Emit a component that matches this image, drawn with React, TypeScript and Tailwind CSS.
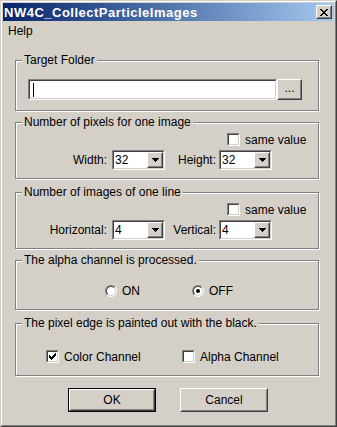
import React from "react";

const FONT = { fontFamily: '"Liberation Sans", Arial, sans-serif' };

function Raised({ className = "", children }: { className?: string; children?: React.ReactNode }) {
  return (
    <div className={`border border-t-white border-l-white border-r-[#404040] border-b-[#404040] ${className}`}>
      <div className="w-full h-full border border-t-[#d4d0c8] border-l-[#d4d0c8] border-r-[#808080] border-b-[#808080] bg-[#d4d0c8] flex items-center justify-center">
        {children}
      </div>
    </div>
  );
}

function Sunken({ className = "", children }: { className?: string; children?: React.ReactNode }) {
  return (
    <div className={`border border-t-[#808080] border-l-[#808080] border-r-white border-b-white ${className}`}>
      <div className="w-full h-full border border-t-[#404040] border-l-[#404040] border-r-[#d4d0c8] border-b-[#d4d0c8] bg-white flex">
        {children}
      </div>
    </div>
  );
}

// classic 7x7 check glyph
function CheckMark() {
  return (
    <svg width="7" height="7" viewBox="0 0 7 7" shapeRendering="crispEdges">
      <path
        d="M6 0h1v1H6zM5 1h2v1H5zM0 2h1v1H0zM4 2h3v1H4zM0 3h2v1H0zM3 3h3v1H3zM0 4h5v1H0zM1 5h3v1H1zM2 6h1v1H2z"
        fill="#000"
      />
    </svg>
  );
}

function Checkbox({ checked, label }: { checked?: boolean; label: string }) {
  return (
    <div className="flex items-center gap-[5px] h-[13px]">
      <Sunken className="w-[13px] h-[13px] shrink-0">
        <div className="w-full h-full flex items-center justify-center">{checked && <CheckMark />}</div>
      </Sunken>
      <span className="leading-[14px]">{label}</span>
    </div>
  );
}

function Radio({ checked, label }: { checked?: boolean; label: string }) {
  return (
    <div className="flex items-center gap-[5px] h-[12px]">
      <div className="w-[12px] h-[12px] shrink-0 rounded-full border border-t-[#808080] border-l-[#808080] border-r-white border-b-white">
        <div className="w-full h-full rounded-full border border-t-[#404040] border-l-[#404040] border-r-[#d4d0c8] border-b-[#d4d0c8] bg-white flex items-center justify-center">
          {checked && <div className="w-[4px] h-[4px] rounded-full bg-black" />}
        </div>
      </div>
      <span className="leading-[14px]">{label}</span>
    </div>
  );
}

function Combo({ value }: { value: string }) {
  return (
    <Sunken className="w-[53px] h-[20px]">
      <div className="flex-1 pl-[1px] leading-[16px]">{value}</div>
      <Raised className="w-[16px] h-[16px]">
        <svg width="7" height="4" viewBox="0 0 7 4" shapeRendering="crispEdges">
          <path d="M0 0h7v1H0zM1 1h5v1H1zM2 2h3v1H2zM3 3h1v1H3z" fill="#000" />
        </svg>
      </Raised>
    </Sunken>
  );
}

function Group({ title, className = "", children }: { title: string; className?: string; children?: React.ReactNode }) {
  return (
    <div
      className={`relative ml-[12px] w-[304px] border border-[#808080] shadow-[inset_1px_1px_0_#fff,1px_1px_0_#fff] ${className}`}
    >
      <span className="absolute -top-[8px] left-[6px] px-[2px] bg-[#d4d0c8] leading-[14px] whitespace-nowrap">
        {title}
      </span>
      {children}
    </div>
  );
}

export default function App() {
  return (
    <div className="w-[337px] h-[427px] text-[12px] text-black" style={FONT}>
      <div className="w-full h-full border border-t-[#d4d0c8] border-l-[#d4d0c8] border-r-[#404040] border-b-[#404040]">
        <div className="w-full h-full border border-t-white border-l-white border-r-[#808080] border-b-[#808080] bg-[#d4d0c8] p-[1px] flex flex-col">
          {/* Title bar */}
          <div className="h-[18px] bg-linear-to-r from-[#0a246a] to-[#a6caf0] flex items-center justify-between pl-[1px] pr-[2px]">
            <span className="font-bold text-white text-[13px] tracking-[0.5px] leading-[15px]">
              NW4C_CollectParticleImages
            </span>
            <Raised className="w-[16px] h-[14px]">
              <svg width="8" height="7" viewBox="0 0 8 7" shapeRendering="crispEdges">
                <path
                  d="M0 0h2v1H0zM6 0h2v1H6zM1 1h2v1H1zM5 1h2v1H5zM2 2h4v1H2zM3 3h2v1H3zM2 4h4v1H2zM1 5h2v1H1zM5 5h2v1H5zM0 6h2v1H0zM6 6h2v1H6z"
                  fill="#000"
                />
              </svg>
            </Raised>
          </div>

          {/* Menu */}
          <div className="h-[19px] flex items-center pl-[5px]">
            <span>Help</span>
          </div>

          {/* Target Folder */}
          <Group title="Target Folder" className="mt-[20px] h-[51px]">
            <div className="pl-[12px] pt-[18px] flex">
              <Sunken className="w-[249px] h-[21px]">
                <div className="ml-[3px] mt-[2px] w-[1px] h-[14px] bg-black" />
              </Sunken>
              <Raised className="w-[25px] h-[21px]">
                <span className="leading-[11px] pb-[2px]">...</span>
              </Raised>
            </div>
          </Group>

          {/* Number of pixels */}
          <Group title="Number of pixels for one image" className="mt-[11px] h-[57px]">
            <div className="pt-[10px] pl-[211px]">
              <Checkbox label="same value" />
            </div>
            <div className="mt-[4px] flex items-center">
              <div className="w-[96px] text-right pr-[5px]">Width:</div>
              <Combo value="32" />
              <div className="w-[54px] text-right pr-[3px]">Height:</div>
              <Combo value="32" />
            </div>
          </Group>

          {/* Number of images */}
          <Group title="Number of images of one line" className="mt-[13px] h-[57px]">
            <div className="pt-[10px] pl-[211px]">
              <Checkbox label="same value" />
            </div>
            <div className="mt-[4px] flex items-center">
              <div className="w-[96px] text-right pr-[5px]">Horizontal:</div>
              <Combo value="4" />
              <div className="w-[54px] text-right pr-[3px]">Vertical:</div>
              <Combo value="4" />
            </div>
          </Group>

          {/* Alpha channel */}
          <Group title="The alpha channel is processed." className="mt-[11px] h-[50px]">
            <div className="pt-[24px] pl-[89px] flex">
              <div className="w-[87px]">
                <Radio label="ON" />
              </div>
              <Radio checked label="OFF" />
            </div>
          </Group>

          {/* Pixel edge */}
          <Group title="The pixel edge is painted out with the black." className="mt-[13px] h-[53px]">
            <div className="pt-[26px] pl-[30px] flex">
              <div className="w-[136px]">
                <Checkbox checked label="Color Channel" />
              </div>
              <Checkbox label="Alpha Channel" />
            </div>
          </Group>

          {/* Buttons */}
          <div className="mt-[12px] ml-[65px] flex gap-[24px]">
            <div className="w-[88px] h-[24px] border border-black">
              <div className="w-full h-full border border-t-white border-l-white border-r-[#404040] border-b-[#404040]">
                <div className="w-full h-full border border-t-[#d4d0c8] border-l-[#d4d0c8] border-r-[#808080] border-b-[#808080] flex items-center justify-center">
                  OK
                </div>
              </div>
            </div>
            <Raised className="w-[88px] h-[24px]">Cancel</Raised>
          </div>
        </div>
      </div>
    </div>
  );
}
